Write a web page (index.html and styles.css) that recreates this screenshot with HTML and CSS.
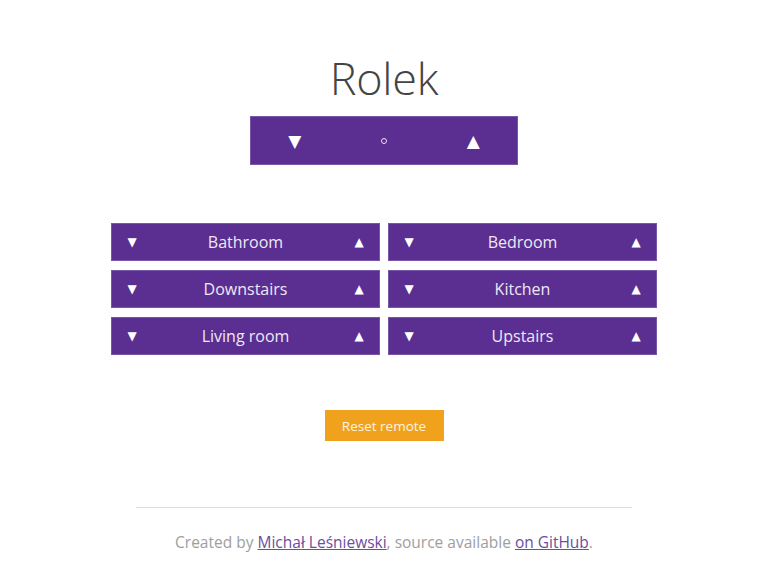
FILE: index.html
```html
<!DOCTYPE html>
<html lang="en">
<head>
<meta charset="utf-8">
<title>Rolek</title>
<link rel="stylesheet" href="styles.css">
</head>
<body>
<main class="page">
  <h1 class="title">Rolek</h1>
  <div class="master">
    <button class="master-btn tri-lg">▼</button>
    <button class="master-btn"><span class="ring"></span></button>
    <button class="master-btn tri-lg">▲</button>
  </div>
  <div class="rooms">
    <div class="room"><button class="arrow">▼</button><span class="name">Bathroom</span><button class="arrow">▲</button></div>
    <div class="room"><button class="arrow">▼</button><span class="name">Bedroom</span><button class="arrow">▲</button></div>
    <div class="room"><button class="arrow">▼</button><span class="name">Downstairs</span><button class="arrow">▲</button></div>
    <div class="room"><button class="arrow">▼</button><span class="name">Kitchen</span><button class="arrow">▲</button></div>
    <div class="room"><button class="arrow">▼</button><span class="name">Living room</span><button class="arrow">▲</button></div>
    <div class="room"><button class="arrow">▼</button><span class="name">Upstairs</span><button class="arrow">▲</button></div>
  </div>
  <button class="reset">Reset remote</button>
  <hr class="rule">
  <p class="footer">Created by <a href="#">Michał Leśniewski</a>, source available <a href="#">on GitHub</a>.</p>
</main>
</body>
</html>
```
FILE: styles.css
```css
html, body {
  margin: 0;
  padding: 0;
  background: #fff;
}
body {
  font-family: "Open Sans", "Noto Sans", sans-serif;
  color: #444;
}
.page {
  display: flex;
  flex-direction: column;
  align-items: center;
  padding-top: 50px;
}
.title {
  margin: 0;
  font-size: 45px;
  font-weight: 300;
  line-height: 56px;
  color: #444;
  letter-spacing: -0.3px;
}
.master {
  margin-top: 10px;
  width: 268px;
  height: 49px;
  display: grid;
  grid-template-columns: 1fr 1fr 1fr;
  background: #5b2e91;
  box-shadow: inset 0 0 0 1px #7a56a8;
}
.master-btn {
  border: 0;
  background: transparent;
  color: #fff;
  font-family: "DejaVu Sans", sans-serif;
  padding: 0;
  cursor: pointer;
  display: flex;
  align-items: center;
  justify-content: center;
}
.tri-lg { font-size: 17px; }
.ring {
  display: block;
  width: 4px;
  height: 4px;
  border: 1.5px solid #e8e0f2;
  border-radius: 50%;
  margin-top: 1px;
}
.rooms {
  margin-top: 58px;
  display: grid;
  grid-template-columns: 269px 269px;
  column-gap: 8px;
  row-gap: 9px;
}
.room {
  height: 38px;
  background: #5b2e91;
  box-shadow: inset 0 0 0 1px #7a56a8;
  display: flex;
  align-items: center;
  color: #eee8f4;
}
.arrow {
  border: 0;
  background: transparent;
  color: #fff;
  font-family: "DejaVu Sans", sans-serif;
  font-size: 12px;
  width: 42px;
  height: 100%;
  padding: 0;
}
.name {
  flex: 1;
  text-align: center;
  font-size: 16px;
}
.reset {
  margin-top: 55px;
  width: 119px;
  height: 31px;
  border: 0;
  background: #f0a21d;
  color: #fdf3e2;
  font-family: "Open Sans", sans-serif;
  font-size: 13.5px;
  padding: 0;
}
.rule {
  margin: 66px 0 0;
  width: 496px;
  border: 0;
  border-top: 1px solid #ddd;
}
.footer {
  margin: 23px 0 0;
  font-size: 15.5px;
  color: #9e9e9e;
}
.footer a {
  color: #6b4d9e;
}
```
